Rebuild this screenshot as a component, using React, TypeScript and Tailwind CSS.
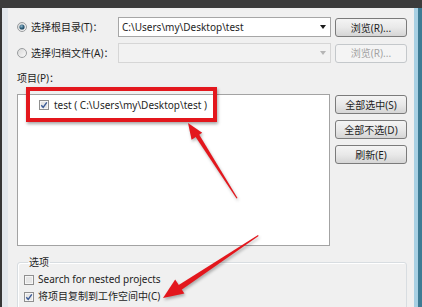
import React from 'react';

const FONT = { fontFamily: '"Noto Sans", "Noto Sans CJK SC", sans-serif' };

const Radio: React.FC<{ checked?: boolean }> = ({ checked }) => (
  <svg width="10" height="10" viewBox="0 0 10 10" className="shrink-0">
    <defs>
      <linearGradient id="rg" x1="0" y1="0" x2="1" y2="1">
        <stop offset="0" stopColor="#d6d6d6" />
        <stop offset="1" stopColor="#fbfbfb" />
      </linearGradient>
      <radialGradient id="rd" cx="0.4" cy="0.35" r="0.7">
        <stop offset="0" stopColor="#8fb6cc" />
        <stop offset="0.6" stopColor="#2f5f7a" />
        <stop offset="1" stopColor="#1d3d52" />
      </radialGradient>
    </defs>
    <circle cx="5" cy="5" r="4.5" fill="url(#rg)" stroke="#999c9e" strokeWidth="1" />
    {checked && <circle cx="5" cy="5" r="2.6" fill="url(#rd)" />}
  </svg>
);

const Check: React.FC<{ checked?: boolean }> = ({ checked }) => (
  <svg width="10" height="10" viewBox="0 0 10 10" className="shrink-0">
    <rect x="0.5" y="0.5" width="9" height="9" fill="#f6f6f6" stroke="#8f8f8f" />
    <rect x="2" y="2" width="6" height="6" fill="#e6e6e6" />
    {checked && (
      <path d="M2.3 5.2 L4.2 7.4 L7.8 2.4" fill="none" stroke="#3a5a96" strokeWidth="1.4" />
    )}
  </svg>
);

const Button: React.FC<{ label: string; disabled?: boolean }> = ({ label, disabled }) => (
  <div
    className={`w-[72px] h-[19px] shrink-0 rounded-[3px] border flex items-center justify-center text-[10px] leading-none ${
      disabled
        ? 'border-[#c4c8cb] bg-[#f4f4f4] text-[#a3a3a3]'
        : 'border-[#7b7b7b] bg-gradient-to-b from-[#f4f4f4] via-[#e9e9e9] to-[#d5d5d5] text-[#1e1e1e]'
    }`}
  >
    {label}
  </div>
);

const Combo: React.FC<{ value?: string; disabled?: boolean }> = ({ value, disabled }) => (
  <div
    className={`w-[213px] h-[20px] shrink-0 border flex items-center ${
      disabled ? 'border-[#d6d6d6] bg-[#f2f2f2]' : 'border-[#a6a6a6] bg-white'
    }`}
  >
    <span className="flex-1 pl-[3px] text-[10px] text-[#1e1e1e] truncate">{value}</span>
    <span className="w-[15px] flex items-center justify-center">
      <svg width="6" height="4" viewBox="0 0 6 4">
        <path d="M0 0 H6 L3 4 Z" fill={disabled ? '#b5b5b5' : '#1a1a1a'} />
      </svg>
    </span>
  </div>
);

export default function App() {
  return (
    <div
      className="relative w-[422px] h-[307px] overflow-hidden bg-[#f0f0f0] flex flex-col text-[#1e1e1e]"
      style={FONT}
    >
      <div className="h-[8px] shrink-0 bg-[#3c3c3c]" />
      <div className="flex flex-1 min-h-0">
        <div className="w-[2px] bg-[#363636]" />
        <div className="w-[6px] bg-[#e2e7ec]" />

        <div className="flex-1 pl-[9px] pr-[7px] pt-[9px] flex flex-col [&>*]:shrink-0">
          {/* source rows */}
          <div className="flex items-center h-[20px]">
            <div className="w-[101px] flex items-center gap-[4px] text-[10px]">
              <Radio checked />
              <span>选择根目录(T)：</span>
            </div>
            <Combo value="C:\Users\my\Desktop\test" />
            <div className="ml-[4px] self-end">
              <Button label="浏览(R)..." />
            </div>
          </div>
          <div className="flex items-center h-[20px] mt-[6px]">
            <div className="w-[101px] flex items-center gap-[4px] text-[10px]">
              <Radio />
              <span>选择归档文件(A)：</span>
            </div>
            <Combo disabled />
            <div className="ml-[4px]">
              <Button label="浏览(R)..." disabled />
            </div>
          </div>

          <div className="mt-[9px] h-[12px] leading-[12px] text-[10px]">项目(P)：</div>

          {/* project list */}
          <div className="mt-[10px] flex h-[152px]">
            <div className="w-[313px] h-full border border-[#a3a3a3] bg-white px-[21px] pt-[4px]">
              <div className="flex items-center gap-[5px] h-[12px] text-[10px]">
                <Check checked />
                <span className="whitespace-nowrap">test ( C:\Users\my\Desktop\test )</span>
              </div>
            </div>
            <div className="ml-[5px] mt-[1px] flex flex-col gap-[6px]">
              <Button label="全部选中(S)" />
              <Button label="全部不选(D)" />
              <Button label="刷新(E)" />
            </div>
          </div>

          {/* options */}
          <fieldset className="mt-[10px] border border-[#d8dde1] rounded-[3px] pl-[6px] pt-[3px] pb-[20px] shadow-[inset_1px_1px_0_#ffffff]">
            <legend className="ml-[4px] px-[1px] h-[12px] leading-[12px] text-[10px]">选项</legend>
            <div className="flex items-center gap-[4px] h-[17px] text-[10px]">
              <Check />
              <span>Search for nested projects</span>
            </div>
            <div className="flex items-center gap-[4px] h-[17px] text-[10px]">
              <Check checked />
              <span>将项目复制到工作空间中(C)</span>
            </div>
          </fieldset>
        </div>

        <div className="w-[4px] bg-[#a8d0e3]" />
        <div className="w-[4px] bg-[#3d7b94]" />
      </div>

      {/* annotations */}
      <div className="absolute inset-0 pointer-events-none">
        <div className="absolute left-[26px] top-[87px] w-[191px] h-[35px] border-4 border-[#e3171d] shadow-[1px_2px_3px_rgba(0,0,0,0.35)]" />
        <svg width="422" height="307" className="absolute inset-0" style={{ filter: 'drop-shadow(1px 2px 1.5px rgba(0,0,0,0.3))' }}>
          <polygon points="237.5,198 236.5,198.6 193.5,133.8 197.3,131.4" fill="#e3171d" />
          <polygon points="188,123 202.2,132.8 191.6,139.8" fill="#e3171d" />
          <polygon points="258,235 258.6,236 180.5,290.5 177.5,285.7" fill="#e3171d" />
          <polygon points="163,298 175.2,279.6 184.4,293.4" fill="#e3171d" />
        </svg>
      </div>
    </div>
  );
}
